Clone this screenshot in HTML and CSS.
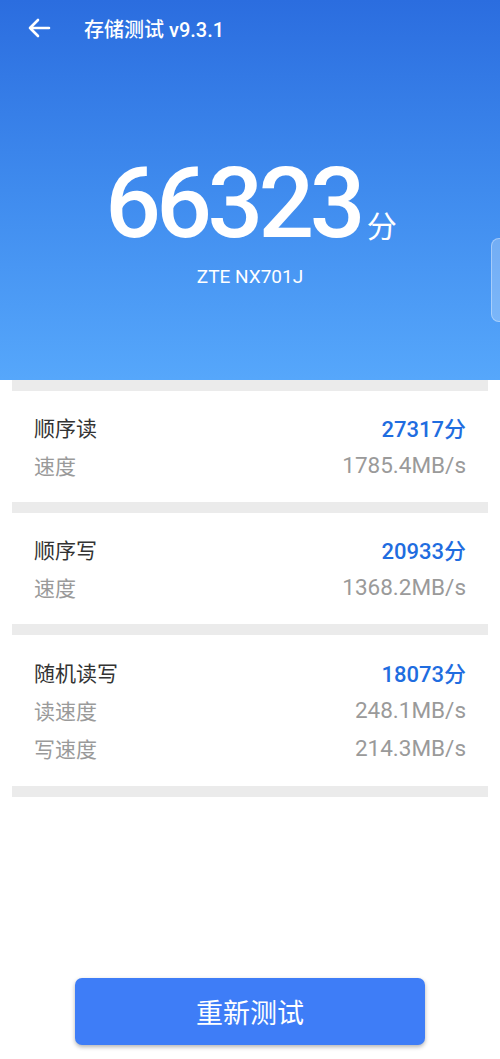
FILE: index.html
```html
<!DOCTYPE html>
<html>
<head>
<meta charset="utf-8">
<title>存储测试</title>
<link rel="stylesheet" href="styles.css">
</head>
<body>

<div class="page">
    <div class="header">
        <div class="topbar">
            <svg class="back" width="24" height="20" viewBox="0 0 24 20">
                <path d="M22 10H3M11 2L3 10l8 8" fill="none" stroke="#fff" stroke-width="2.6" stroke-linecap="round" stroke-linejoin="round"/>
            </svg>
            <span class="title">存储测试 v9.3.1</span>
        </div>
        <div class="total">
            <span class="total-num">66323</span><span class="total-unit">分</span>
        </div>
        <div class="device">ZTE NX701J</div>
        <div class="handle"></div>
    </div>

    <div class="list">
        <div class="gap"></div>
        <div class="card">
            <div class="row">
                <span class="name">顺序读</span>
                <span class="score">27317分</span>
            </div>
            <div class="row sub">
                <span>速度</span>
                <span>1785.4MB/s</span>
            </div>
        </div>
        <div class="gap"></div>
        <div class="card">
            <div class="row">
                <span class="name">顺序写</span>
                <span class="score">20933分</span>
            </div>
            <div class="row sub">
                <span>速度</span>
                <span>1368.2MB/s</span>
            </div>
        </div>
        <div class="gap"></div>
        <div class="card">
            <div class="row">
                <span class="name">随机读写</span>
                <span class="score">18073分</span>
            </div>
            <div class="row sub">
                <span>读速度</span>
                <span>248.1MB/s</span>
            </div>
            <div class="row sub">
                <span>写速度</span>
                <span>214.3MB/s</span>
            </div>
        </div>
        <div class="gap"></div>
    </div>

    <button class="retest">重新测试</button>
</div>

</body>
</html>
```

FILE: styles.css
```css
html, body {
    margin: 0;
    padding: 0;
    background: #fff;
}
body {
    font-family: Roboto, "Noto Sans CJK SC", sans-serif;
}
.page {
    display: flex;
    flex-direction: column;
    min-height: 1059px;
}
.header {
    position: relative;
    height: 380px;
    background: linear-gradient(180deg, #2b6ddf 0%, #3f8bee 50%, #56a7fb 100%);
    color: #fff;
    overflow: hidden;
}
.topbar {
    display: flex;
    align-items: center;
    height: 56px;
    padding-left: 27px;
}
.back {
    display: block;
}
.title {
    margin-left: 33px;
    font-size: 20px;
    font-weight: 500;
}
.total {
    display: flex;
    justify-content: center;
    align-items: baseline;
    margin-top: 98px;
    height: 100px;
    line-height: 100px;
    padding-left: 2px;
}
.total-num {
    font-size: 98px;
    font-weight: 500;
    letter-spacing: -4.6px;
}
.total-unit {
    font-size: 30px;
    margin-left: 6px;
}
.device {
    text-align: center;
    font-size: 19px;
    line-height: 22px;
    margin-top: 12px;
}
.handle {
    position: absolute;
    right: -8px;
    top: 238px;
    width: 15px;
    height: 82px;
    border-radius: 8px;
    background: rgba(255, 255, 255, 0.25);
    border: 1px solid rgba(255, 255, 255, 0.35);
}
.list {
    margin: 0 12px;
}
.gap {
    height: 11px;
    background: #ebebeb;
}
.card {
    padding: 17px 22px 18px;
}
.card:nth-of-type(6) {
    padding-top: 18px;
    padding-bottom: 19px;
}
.row {
    display: flex;
    justify-content: space-between;
    align-items: center;
    height: 38px;
    font-size: 21px;
}
.name {
    color: #333;
}
.score {
    color: #1f6de0;
    font-weight: 500;
    font-size: 22px;
}
.sub {
    color: #9a9a9a;
}
.sub span:last-child {
    font-size: 22.5px;
}
.retest {
    margin: auto 75px 14px;
    height: 67px;
    border: none;
    border-radius: 7px;
    background: #3e7df7;
    color: #fff;
    font-family: Roboto, "Noto Sans CJK SC", sans-serif;
    font-size: 27px;
    box-shadow: 0 2px 4px rgba(0, 0, 0, 0.3);
}
```
